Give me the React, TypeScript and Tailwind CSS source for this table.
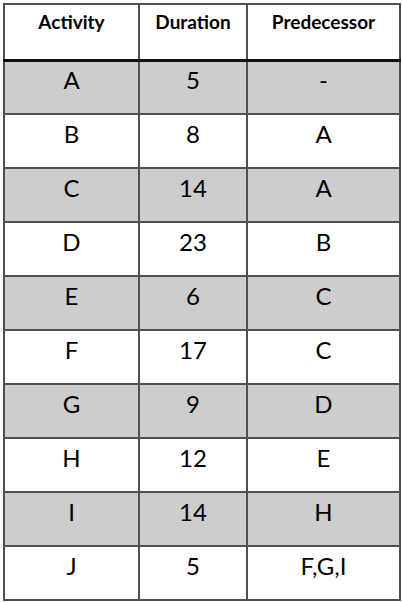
import React from 'react';

type Row = {
  activity: string;
  duration: string;
  predecessor: string;
};

const rows: Row[] = [
  { activity: 'A', duration: '5', predecessor: '-' },
  { activity: 'B', duration: '8', predecessor: 'A' },
  { activity: 'C', duration: '14', predecessor: 'A' },
  { activity: 'D', duration: '23', predecessor: 'B' },
  { activity: 'E', duration: '6', predecessor: 'C' },
  { activity: 'F', duration: '17', predecessor: 'C' },
  { activity: 'G', duration: '9', predecessor: 'D' },
  { activity: 'H', duration: '12', predecessor: 'E' },
  { activity: 'I', duration: '14', predecessor: 'H' },
  { activity: 'J', duration: '5', predecessor: 'F,G,I' },
];

export default function App() {
  return (
    <div className="w-[402px] h-[602px] bg-white pt-[3px] pl-[3px] font-['Lato','Liberation_Sans',sans-serif] text-black">
      <table className="w-[396px] border-collapse table-fixed">
        <colgroup>
          <col className="w-[135px]" />
          <col className="w-[108px]" />
          <col className="w-[153px]" />
        </colgroup>
        <thead>
          <tr className="h-[56px]">
            {['Activity', 'Duration', 'Predecessor'].map(h => (
              <th
                key={h}
                className="border-2 border-[#505050] border-b-[3px] border-b-[#111] align-top pt-[3px] text-[19px] font-bold">
                {h}
              </th>
            ))}
          </tr>
        </thead>
        <tbody>
          {rows.map((r, i) => (
            <tr key={r.activity} className={`h-[54px] ${i % 2 === 0 ? 'bg-[#cdcdcd]' : 'bg-white'}`}>
              <td className="border-2 border-[#505050] text-center text-[24px] pb-[14px]">{r.activity}</td>
              <td className="border-2 border-[#505050] text-center text-[24px] pb-[14px]">{r.duration}</td>
              <td className="border-2 border-[#505050] text-center text-[24px] pb-[14px]">{r.predecessor}</td>
            </tr>
          ))}
        </tbody>
      </table>
    </div>
  );
}
